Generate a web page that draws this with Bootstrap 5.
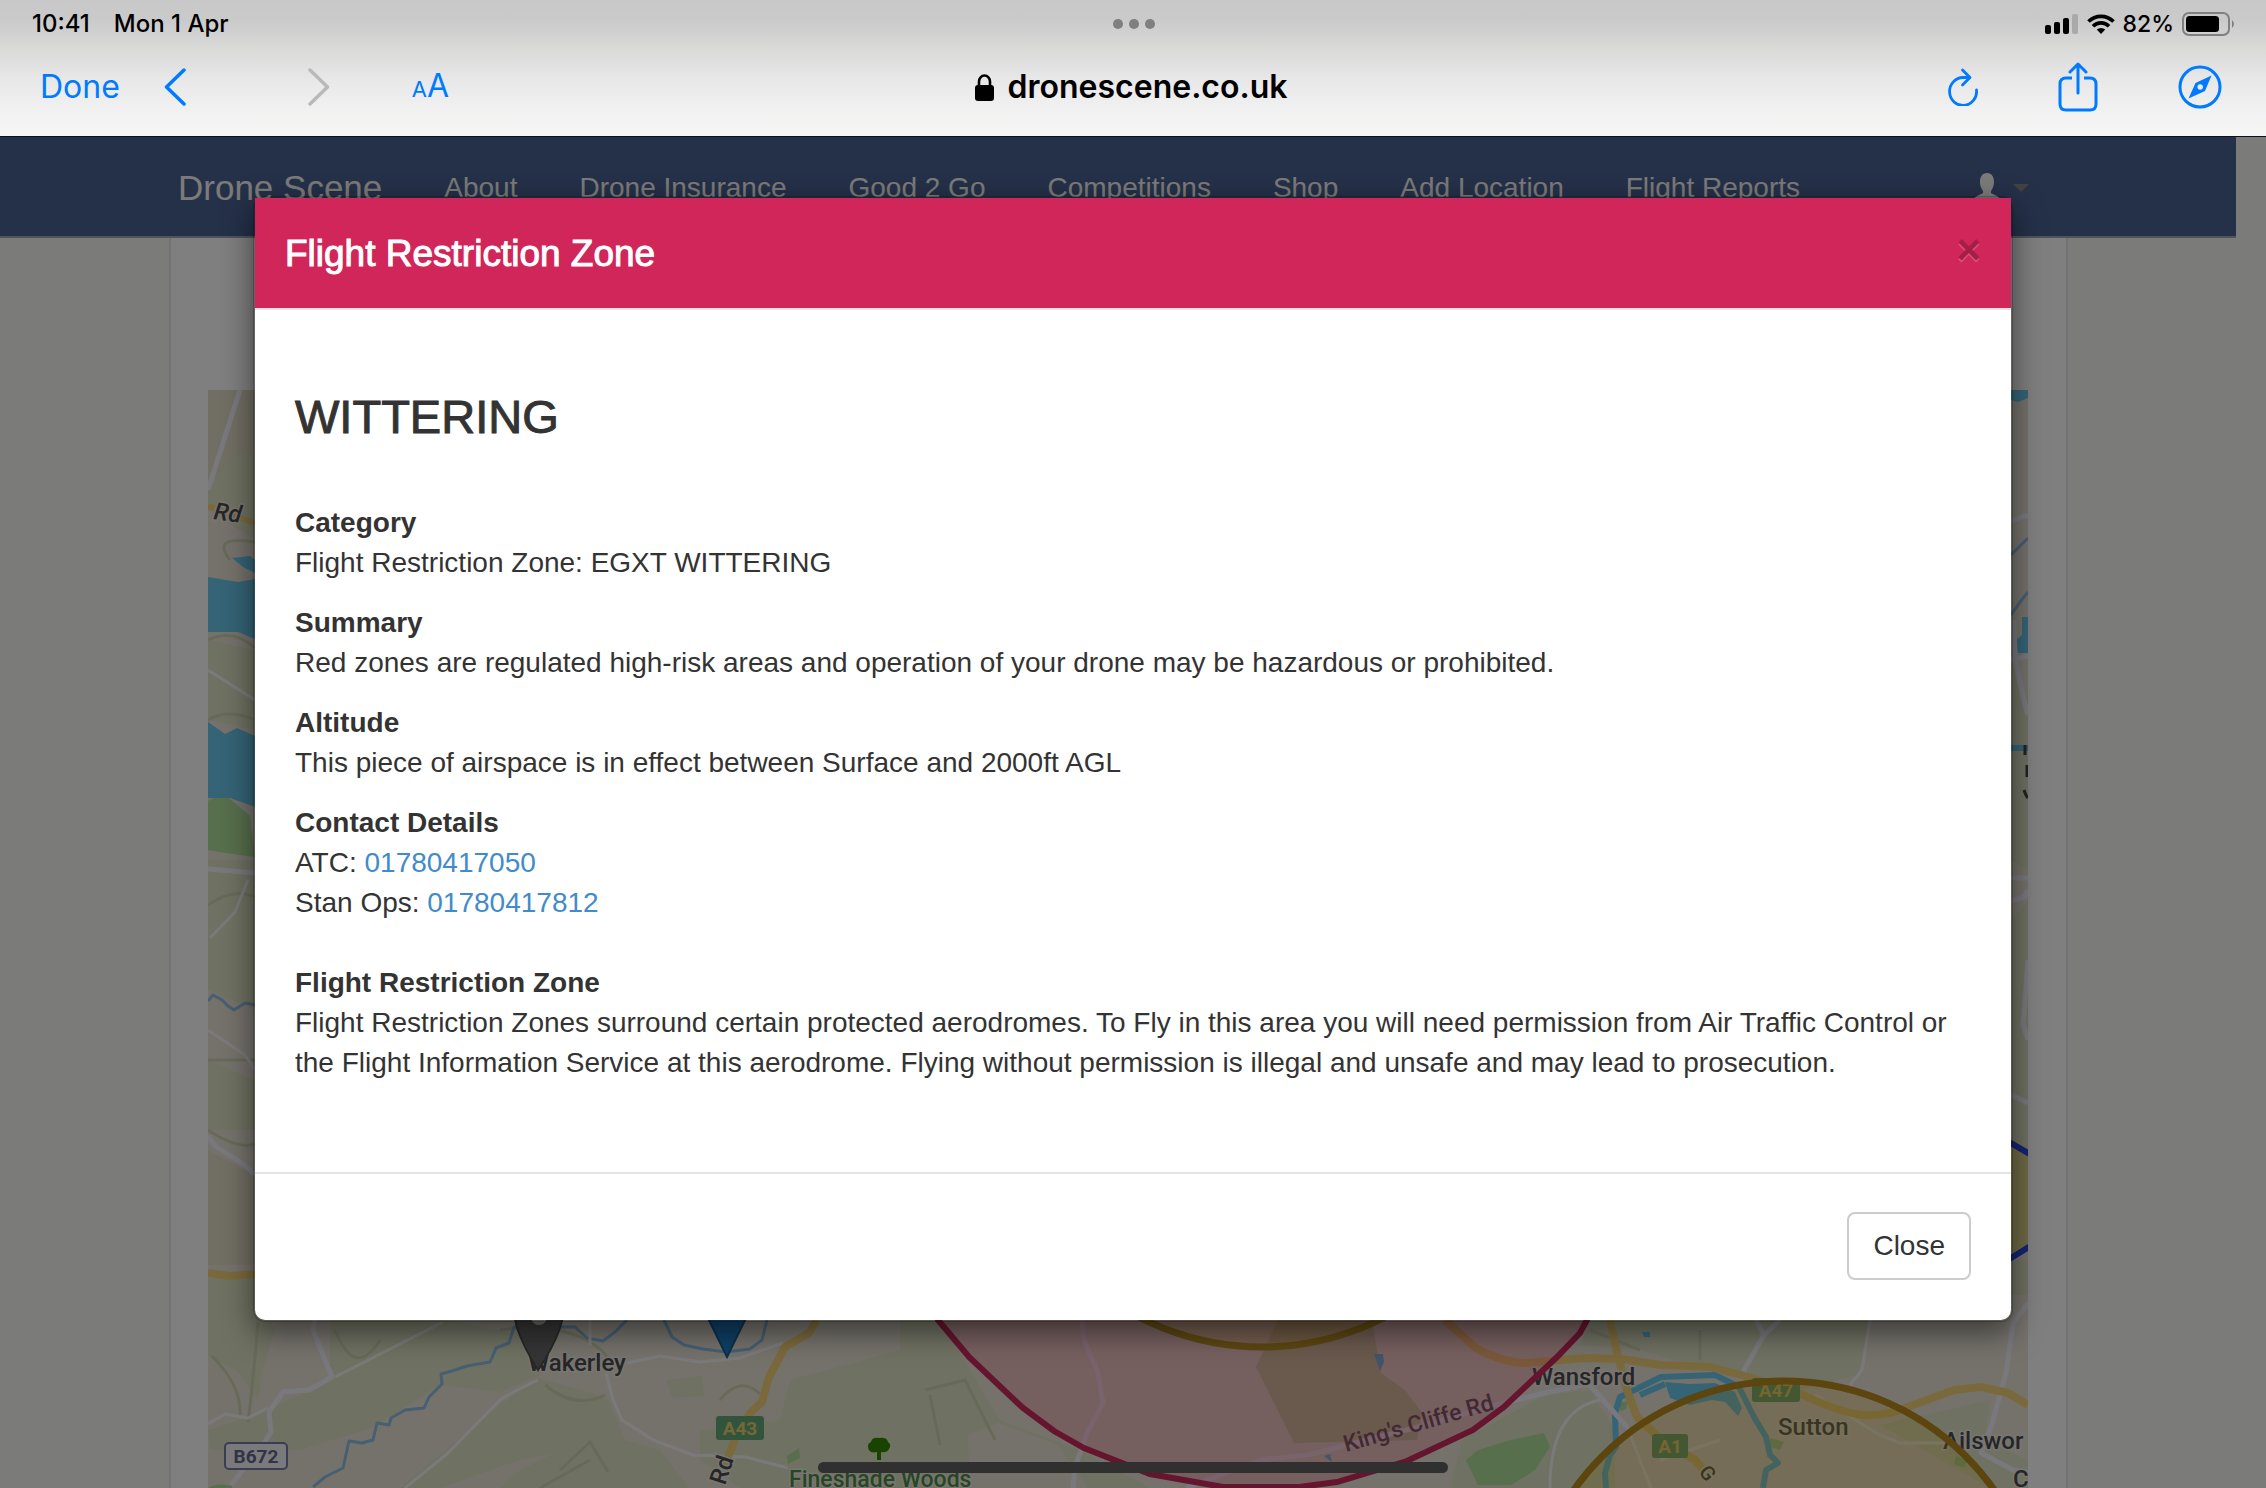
<!DOCTYPE html>
<html lang="en">
<head>
<meta charset="utf-8">
<meta name="viewport" content="width=device-width, initial-scale=1">
<title>Drone Scene – Flight Restriction Zone</title>
<link href="https://cdn.jsdelivr.net/npm/bootstrap@5.3.0/dist/css/bootstrap.min.css" rel="stylesheet">
<style>
  body { font-family: "Liberation Sans", Arial, sans-serif; font-size: 28px; line-height: 40px; color: #333; background: #f6f6f2; }
  a { text-decoration: none; }

  /* browser chrome */
  .chrome { font-family: Inter, Roboto, sans-serif; color: #000; height: 136px; z-index: 1;
    background: linear-gradient(#c8c8c8 0, #cacaca 20px, #dadad9 50px, #e8e8e8 80px, #f1f1f1 110px, #f6f6f5 136px); box-shadow: 0 1px 0 #1a2130; }
  .chrome button { border: 0; background: none; padding: 0; color: #007aff; line-height: 40px; }
  .chrome svg, .site-nav svg { display: block; }
  .status-row { height: 48px; padding: 0 30px 0 32px; font-size: 24px; font-weight: 500; }
  .status-row .battery-text { font-size: 23px; }
  .tool-row { height: 78px; padding: 0 44px 0 40px; font-size: 32px; }
  .side { flex: 1 1 0; }
  .host { font-weight: 600; font-size: 32px; gap: 14px; }
  .small-a { font-size: 22px; }
  .tools { gap: 80px; }
  .nav-arrows { gap: 122px; margin-left: 44px; margin-right: 82px; }

  /* site */
  .site { padding-right: 30px; }
  .site-nav { height: 102px; background: #4a6292; border-bottom: 2px solid #a0a8b0; padding: 0; }
  .nav-inner { width: 100%; max-width: 1940px; }
  .site-nav a { color: #f6f6f2; padding: 2px 31px 0; }
  .site-nav .navbar-brand { font-size: 35px; margin: 0; padding-left: 30px; line-height: 100px; }
  .site-nav .nav-link { line-height: 96px; }
  .user-menu { gap: 12px; margin-right: 28px; }
  .panel { max-width: 1899px; background: #fff; border: solid #e4e4e8; border-width: 0 2px; padding: 152px 38px 0 37px; }
  .map { display: block; width: 100%; background: #e6e3d0; }

  /* modal */
  .zone-dialog { max-width: 1760px; margin: 60px auto 0; pointer-events: auto; }
  .zone-dialog .modal-content { border: 2px solid rgba(0,0,0,.2); background-clip: padding-box; border-radius: 12px; box-shadow: 0 10px 30px rgba(0,0,0,.5); color: #333; }
  .zone-dialog .modal-header { background: #d02659; color: #fff; padding: 31px 30px 29px; border-bottom: 2px solid #e5e5e5; border-radius: 0; align-items: flex-start; }
  .zone-dialog .modal-title { font-size: 37px; line-height: 50px; font-weight: 400; -webkit-text-stroke: 1px currentColor; }
  .dismiss { border: 0; background: none; padding: 0; opacity: .2; font-size: 42px; font-weight: 700; line-height: 42px; color: #000; text-shadow: 0 2px 0 #fff; }
  .zone-dialog .modal-body { padding: 41px 40px 69px; }
  .zone-dialog h3 { font-size: 47px; line-height: 52px; font-weight: 400; -webkit-text-stroke: 1px currentColor; margin: 40px 0 60px; }
  .zone-dialog p { margin: 0 0 20px; }
  .zone-dialog p a { color: #428bca; }
  .zone-dialog .modal-footer { border-top: 2px solid #e5e5e5; padding: 38px 40px 40px; }
  .zone-dialog .modal-footer > * { margin: 0; }
  .btn-plain { font-size: 28px; line-height: 40px; padding: 12px 24px; border: 2px solid #ccc; border-radius: 8px; color: #333; background: #fff; }
  .home-bar { width: 630px; height: 11px; bottom: 15px; background: #303030; z-index: 2000; }
</style>
<script src="https://cdn.jsdelivr.net/npm/bootstrap@5.3.0/dist/js/bootstrap.bundle.min.js"></script>
</head>
<body class="vh-100 d-flex flex-column overflow-hidden">

<header class="chrome position-relative flex-shrink-0">
  <div class="status-row d-flex align-items-center">
    <div class="side d-flex"><span>10:41</span><span class="ms-4">Mon 1 Apr</span></div>
    <svg width="42" height="10" fill="#7f7f7f" aria-hidden="true"><circle cx="5" cy="5" r="5"/><circle cx="21" cy="5" r="5"/><circle cx="37" cy="5" r="5"/></svg>
    <div class="side d-flex justify-content-end align-items-center">
      <svg width="34" height="20" aria-hidden="true"><rect x="0" y="11" width="6" height="9" rx="2"/><rect x="9" y="8" width="6" height="12" rx="2"/><rect x="18" y="4" width="6" height="16" rx="2"/><rect x="27" y="0" width="6" height="20" rx="2" fill="#a9a9a9"/></svg>
      <svg class="ms-2" width="28" height="20" viewBox="0 0 28 20" fill="none" stroke="#000" stroke-width="3.6" aria-hidden="true"><path d="M1.5 7.6a17.6 17.6 0 0 1 25 0"/><path d="M6 12.2a11.3 11.3 0 0 1 16 0"/><path d="M14 20l-4.2-4.4a6 6 0 0 1 8.400 0z" fill="#000" stroke="none"/></svg>
      <span class="battery-text mx-2">82%</span>
      <svg width="54" height="24" aria-hidden="true"><rect x="1" y="1" width="46" height="22" rx="6" fill="none" stroke="#808080" stroke-width="2"/><rect x="4" y="4" width="33" height="16" rx="3.500"/><path d="M50 8q4 4 0 8z" fill="#808080"/></svg>
    </div>
  </div>
  <div class="tool-row d-flex align-items-center">
    <div class="side d-flex align-items-center">
      <button type="button">Done</button>
      <div class="nav-arrows d-flex">
        <button type="button" aria-label="Back"><svg width="22" height="38" fill="none" stroke="#007aff" stroke-width="3.5" stroke-linecap="round" stroke-linejoin="round"><path d="M20 2L2.500 19L20 36"/></svg></button>
        <button type="button" aria-label="Forward"><svg width="22" height="38" fill="none" stroke="#b9b9b9" stroke-width="3.5" stroke-linecap="round" stroke-linejoin="round"><path d="M2 2L19.500 19L2 36"/></svg></button>
      </div>
      <button type="button" aria-label="Page settings"><span class="small-a">A</span>A</button>
    </div>
    <div class="host d-flex align-items-center">
      <svg width="19" height="27" aria-hidden="true"><rect x="0" y="11" width="19" height="16" rx="3"/><path d="M4 12V7.500a5.500 6 0 0 1 11 0V12" fill="none" stroke="#000" stroke-width="2.600"/></svg>
      <span>dronescene.co.uk</span>
    </div>
    <div class="side tools d-flex justify-content-end align-items-center">
      <button type="button" aria-label="Reload"><svg width="30" height="38" fill="none" stroke="#007aff" stroke-width="2.800" stroke-linecap="round" stroke-linejoin="round"><path d="M28.500 22A13.500 14 0 1 1 15 9.500H21"/><path d="M14.500 2L22 9.500L14.500 17"/></svg></button>
      <button type="button" aria-label="Share"><svg width="40" height="50" fill="none" stroke="#007aff" stroke-width="3" stroke-linecap="round" stroke-linejoin="round"><path d="M14 16H8q-6 0-6 6V42q0 6 6 6H32q6 0 6-6V22q0-6-6-6H26" stroke-linecap="butt"/><path d="M20 31V3M12 10L20 2L28 10"/></svg></button>
      <button type="button" aria-label="Open in browser"><svg width="44" height="44"><circle cx="22" cy="22" r="20" fill="none" stroke="#007aff" stroke-width="3"/><path fill="#007aff" fill-rule="evenodd" d="M33.500 10.500L27 26L10.500 33.500L17.500 18ZM22.200 19.200a2.800 2.800 0 1 0 .01 0z"/></svg></button>
    </div>
  </div>
</header>

<div class="position-relative flex-grow-1 overflow-hidden">
  <div class="site">
    <nav class="navbar site-nav">
      <div class="nav-inner mx-auto d-flex align-items-center">
        <a class="navbar-brand" href="#">Drone Scene</a>
        <a class="nav-link" href="#">About</a>
        <a class="nav-link" href="#">Drone Insurance</a>
        <a class="nav-link" href="#">Good 2 Go</a>
        <a class="nav-link" href="#">Competitions</a>
        <a class="nav-link" href="#">Shop</a>
        <a class="nav-link" href="#">Add Location</a>
        <a class="nav-link" href="#">Flight Reports</a>
        <a class="user-menu d-flex align-items-center ms-auto" href="#" aria-label="Account">
          <svg width="28" height="30" fill="#f6f6f2"><path d="M14 0c5 0 7 4 7 9 0 4-1.500 7-3 9v2c3 2 10 4 10 8v2H0v-2c0-4 7-6 10-8v-2c-1.500-2-3-5-3-9 0-5 2-9 7-9z"/></svg>
          <svg width="16" height="8" fill="#88857e"><path d="M0 0H16L8 8z"/></svg>
        </a>
      </div>
    </nav>
    <main class="panel mx-auto">
      <svg class="map" viewBox="208 390 1820 1098" role="img" aria-label="Map" font-family="Roboto, sans-serif" font-size="24" fill="none">
        <rect x="208" y="390" width="1820" height="1098" fill="#ebe5d8"/>
        <!-- fields -->
        <g fill="#dfe3c4">
          <path d="M208 390h32l15 60v90l-47-30zM208 640l47 10v80l-47-10zM208 860h47v150l-47-20zM208 1060l47 20v50h-47zM208 1200l47-30v90h-47z"/>
          <path d="M208 1278H255L275 1330L262 1372L258 1400L236 1370L208 1356z"/>
          <path d="M330 1320H450L545 1340L540 1375L500 1392L440 1385L400 1410L372 1428L300 1450H210L208 1430L262 1412L330 1380z"/>
          <path d="M538 1378L600 1395L608 1400L606 1425L560 1452L520 1460L440 1488H400L500 1405z"/>
          <path d="M608 1400L625 1440L660 1450L690 1488H500L520 1470L560 1450zM790 1380L900 1350V1320H940L1000 1420L1080 1450L1150 1488H740L700 1460V1430L780 1420zM666 1380l36-4 2 20-32 2z"/>
          <path d="M1590 1320H1870L1858 1375L1800 1390L1700 1367L1640 1350L1580 1345zM1545 1395L1590 1390L1615 1430V1488H1450L1462 1440zM1880 1425L1990 1400L1985 1440L2028 1460V1488H1990z"/>
          <path d="M2011 650L2028 700V870L2011 860zM2011 920L2028 900V1150L2011 1140zM2011 1260H2028V1295H2011z"/>
        </g>
        <path d="M208 390h47v60l-20 5-27 30zM208 1150l47 25v90h-47z" fill="#e2ddc6"/>
        <path d="M968 1435l30-12 60 22 30 43h-118z" fill="#ebe5d8"/>
        <path d="M1278 1320H1372L1381 1373L1405 1390L1422 1413L1417 1440L1294 1443L1256 1367z" fill="#ced6aa"/>
        <g stroke="#ced5b0" stroke-width="3"><path d="M208 640q25-12 47 8M208 720q20-12 47 0M230 560q-20-25 25-18M208 905q25-18 47-8M208 1060h47M208 1130q30 20 47 14M212 1356q30 30 28 60M258 1322q-6 70-10 100M335 1330q20 50 45 10M500 1330q80-10 110 30M545 1385q30 25 60 10M590 1460l-50 28M560 1470l30-28 18 30M720 1400q20-25 40-6M925 1390l40-10 30 60M930 1395l10 50M1590 1330l50 20M1700 1330v30"/></g>
        <!-- woods -->
        <g fill="#aede98"><path d="M208 801L223 793L250 816L255 857L225 853L208 850z"/><path d="M1466 1460L1478 1450L1511 1440L1544 1433L1550 1447L1535 1470L1511 1485H1478z"/><path d="M787 1456l12-8 1 10-12 6zM208 1488q10-6 24-2v2zM1620 1403l8-2-2 8-6 2zM1770 1438l14 4-4 8-10-3zM1956 1456l12 4-4 8-10-4z"/></g>
        <!-- water -->
        <g fill="#6ac8ec"><path d="M208 577L238 582L255 579V639L238 632H208z"/><path d="M232 558L250 556L255 560V573L243 567z"/><path d="M208 722L225 734L237 728L255 736V807L230 798H208z"/><path d="M2011 390H2028V398L2018 402L2011 400zM2016 640L2022 635L2022 617H2028V653H2018z"/><path d="M1665 1382L1690 1384L1715 1383L1735 1392L1742 1408L1738 1416L1725 1402L1712 1400L1690 1405L1670 1398z"/><path d="M1374 1354h9l1 8-4 9zM1324 1456l6-2 2 8zM1642 1332h8v5h-6z"/></g>
        <g stroke="#6ac8ec" stroke-width="6" stroke-linejoin="round"><path d="M1606 1488L1605 1473L1610 1455L1616 1447L1615 1413L1620 1397L1661 1377L1715 1375L1739 1387L1754 1417L1766 1437L1770 1455L1778 1463L1766 1470L1763 1488"/><path d="M1640 1395L1665 1384M2011 748H2028"/></g>
        <g stroke="#8dbfe6" stroke-width="3" stroke-linejoin="round"><path d="M627 1320L615 1332L603 1341L587 1338L575 1327H514L509 1343L496 1348L490 1362L478 1364L467 1366L455 1370L441 1374L442 1384L436 1390L429 1397L424 1408L405 1410L391 1418L389 1425L377 1423L373 1440L362 1443L349 1441L343 1468L325 1477L313 1487"/><path d="M664 1320L672 1337L684 1345L703 1349L726 1352L750 1349L762 1340L767 1320"/><path d="M208 1001L213 995L222 1000L228 1006L234 1010L245 1003L255 1005M2011 555L2028 538M2011 615L2020 602L2028 592"/></g>
        <!-- minor roads -->
        <g stroke="#f7f4f4" stroke-width="3" stroke-linejoin="round"><path d="M443 1322L335 1377M538 1380Q512 1392 500 1400L448 1453L405 1488M606 1373L613 1400L622 1420L653 1440L693 1455L745 1457L788 1468M627 1363L660 1356L700 1362L740 1358L783 1343M208 1424L225 1414L248 1418L268 1408M210 938L235 912L248 880M208 670L255 700M208 1030L245 1055L255 1070M590 1320V1345M1870 1320L1862 1370L1850 1385M1815 1395L1880 1435L1900 1443H1950M1600 1400Q1550 1410 1550 1488M1627 1427L1651 1488M1660 1460L1720 1440"/></g>
        <g stroke="#f2f0fa" stroke-width="5" stroke-linejoin="round"><path d="M240 390L208 490M208 869L255 873M208 1136L215 1146L245 1165L255 1175M315 1320L313 1330L332 1377L309 1390L283 1392L269 1412L271 1432L264 1443L231 1485"/><path d="M1082 1320L1084 1340L1098 1373L1103 1403L1087 1433L1075 1467L1073 1488M1186 1488L1261 1460L1308 1455L1426 1425L1488 1407L1549 1392L1600 1382"/><path d="M1756 1320L1764 1335L1744 1370V1376M1780 1320L1764 1335M2028 1303L2013 1323L2006 1373L1991 1427L1981 1453L2013 1470L2028 1472M1590 1385L1627 1427M2011 521L2028 515M2014 620L2015 660L2024 700L2028 715M2011 660L2028 656M2011 878H2028M2011 901L2024 897L2028 890M2028 960L2023 1025L2028 1040M2011 1095L2028 1103"/></g>
        <!-- main roads -->
        <g stroke="#f5d378" stroke-width="8" stroke-linejoin="round"><path d="M208 506L255 523" stroke-width="6"/><path d="M208 1273L230 1276L255 1274M817 1320L809 1333L785 1347L769 1377L762 1402L750 1413L736 1437L724 1467"/><path d="M1445 1320L1476 1348Q1500 1362 1525 1363L1585 1358L1622 1359L1661 1365L1710 1367L1749 1377L1803 1395Q1850 1417 1871 1415Q1890 1415 1905 1408L1954 1390L1981 1387L2008 1393L2028 1405"/><path d="M1610 1320L1617 1353L1627 1390L1637 1417L1661 1440L1695 1460L1710 1477"/></g>
        <!-- road shields and places -->
        <g font-weight="700" font-size="19" text-anchor="middle" stroke="none"><rect x="716" y="1416" width="48" height="24" rx="3" fill="#66a878"/><rect x="1752" y="1378" width="48" height="24" rx="3" fill="#66a878"/><rect x="1652" y="1434" width="36" height="24" rx="3" fill="#66a878"/><g fill="#e8d070"><text x="740" y="1435">A43</text><text x="1776" y="1397">A47</text><text x="1670" y="1453">A1</text></g><rect x="225" y="1443" width="62" height="26" rx="4" fill="#f4f2f6" stroke="#7878a4" stroke-width="2"/><text x="256" y="1463" fill="#66668c">B672</text></g>
        <g fill="#4c4c4c" stroke="#f0ede4" stroke-width="3" paint-order="stroke" font-weight="500">
          <text x="528" y="1371">Wakerley</text><text x="1532" y="1385">Wansford</text><text x="1778" y="1435">Sutton</text><text x="1943" y="1449">Ailswor</text><text x="2013" y="1487">C</text>
          <text transform="translate(213 519) rotate(8)" font-style="italic">Rd</text><text transform="translate(725 1486) rotate(-72)">Rd</text><text transform="translate(1698 1472) rotate(52)" font-size="20">G</text>
          <text transform="translate(1346 1452) rotate(-16)" font-size="23" fill="#6a5a62" stroke="none">King's Cliffe Rd</text>
          <text x="789" y="1487" font-size="23" fill="#4f8c45">Fineshade Woods</text>
        </g>
        <path d="M2025 745v10M2027 765v12M2024 790q2 6 4 8" stroke="#444" stroke-width="3"/>
        <path d="M877 1460v-8q-9 2-9-6 0-3 3-4 1-5 8-4 8-1 9 4 4 3 1 7-2 4-8 3v8z" fill="#308800"/>
        <!-- airspace -->
        <path d="M938 1320L969 1357L1023 1408L1054 1431L1084 1448L1150 1474L1223 1487H1299L1337 1482L1407 1461L1473 1430L1504 1407L1557 1357L1580 1333L1587 1320L1620 1100L1261 700L910 1100z" fill="#f03868" fill-opacity=".22" stroke="#cc2a5e" stroke-width="6"/>
        <circle cx="1262" cy="1080" r="267" fill="#e0a020" fill-opacity=".2" stroke="#b88e24" stroke-width="7"/>
        <circle cx="1784" cy="1638" r="257" fill="#e8c030" fill-opacity=".25" stroke="#b88a1c" stroke-width="7"/>
        <path d="M2040 1160L1990 1131V1271L2040 1240z" fill="#d0c040" fill-opacity=".5" stroke="#2a48e4" stroke-width="6"/>
        <!-- pins -->
        <path d="M513 1310L517 1328Q524 1348 538 1370Q553 1348 560 1328L565 1310z" fill="#6b6b6b" stroke="#505050" stroke-width="2"/><circle cx="539" cy="1317" r="8" fill="#d8d8d0"/>
        <path d="M704 1310L727 1357L750 1310z" fill="#2080c8" stroke="#1a609a" stroke-width="2"/>
      </svg>
    </main>
  </div>

  <div class="modal-backdrop show position-absolute w-100 h-100"></div>

  <div class="modal show d-block position-absolute overflow-hidden" tabindex="-1" role="dialog" aria-labelledby="zoneTitle">
    <div class="modal-dialog zone-dialog">
      <div class="modal-content">
        <div class="modal-header">
          <h4 class="modal-title" id="zoneTitle">Flight Restriction Zone</h4>
          <button type="button" class="dismiss" aria-label="Dismiss">×</button>
        </div>
        <div class="modal-body">
          <h3>WITTERING</h3>
          <p><strong>Category</strong><br>Flight Restriction Zone: EGXT WITTERING</p>
          <p><strong>Summary</strong><br>Red zones are regulated high-risk areas and operation of your drone may be hazardous or prohibited.</p>
          <p><strong>Altitude</strong><br>This piece of airspace is in effect between Surface and 2000ft AGL</p>
          <p><strong>Contact Details</strong><br>ATC: <a href="tel:01780417050">01780417050</a><br>Stan Ops: <a href="tel:01780417812">01780417812</a><br><br>
          <strong>Flight Restriction Zone</strong><br>Flight Restriction Zones surround certain protected aerodromes. To Fly in this area you will need permission from Air Traffic Control or the Flight Information Service at this aerodrome. Flying without permission is illegal and unsafe and may lead to prosecution.</p>
        </div>
        <div class="modal-footer">
          <button type="button" class="btn btn-plain">Close</button>
        </div>
      </div>
    </div>
  </div>
  <div class="home-bar position-absolute start-50 translate-middle-x rounded-pill"></div>
</div>
</body>
</html>
